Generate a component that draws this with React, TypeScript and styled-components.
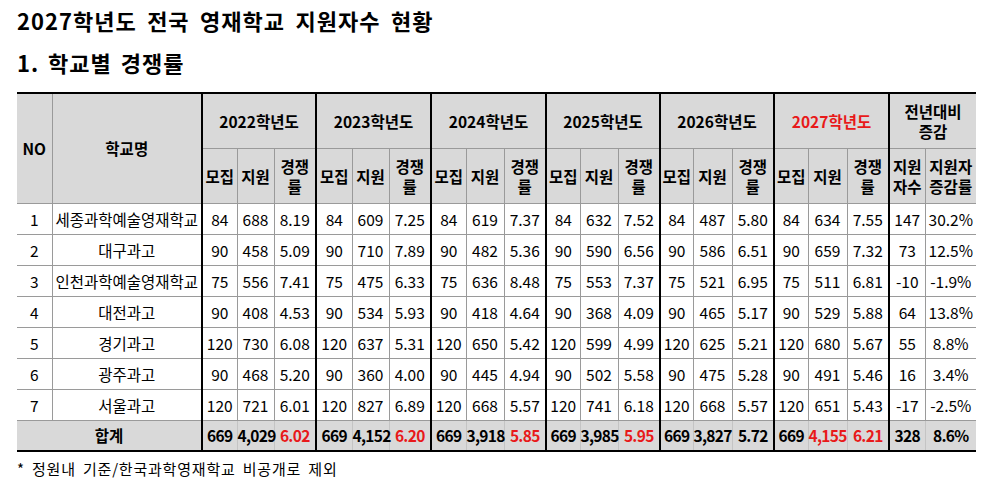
import React from "react";
import styled, { createGlobalStyle } from "styled-components";

const Global = createGlobalStyle`
  html, body { margin: 0; padding: 0; background: #fff; }
  body { font-family: "Noto Sans CJK KR", "Noto Sans", sans-serif; color: #000; }
`;

const Page = styled.div`
  padding: 8px 0 0 17px;
  width: 1000px;
  box-sizing: border-box;
`;

const Title = styled.h1`
  margin: 0;
  font-size: 22px;
  line-height: 24px;
  font-weight: 700;
  letter-spacing: 1px;
  word-spacing: 4.5px;
`;

const SubTitle = styled.h2`
  margin: 18px 0 0 0;
  font-size: 22px;
  line-height: 24px;
  font-weight: 700;
  letter-spacing: 1px;
  word-spacing: 3px;
`;

const Table = styled.table`
  margin-top: 18px;
  border-collapse: collapse;
  table-layout: fixed;
  width: 959px;
  font-size: 15.5px;
`;

const Cell = styled.td<{ $thick?: boolean; $gray?: boolean; $bold?: boolean; $red?: boolean; $first?: boolean; $last?: boolean; $h?: number; $light?: boolean; $tight?: boolean }>`
  border: 1px solid ${(p) => (p.$light ? "#c4c4c4" : "#9a9a9a")};
  ${(p) => (p.$thick ? "border-left: 2px solid #000;" : "")}
  ${(p) => (p.$first ? "border-left: none;" : "")}
  ${(p) => (p.$last ? "border-right: none;" : "")}
  background: ${(p) => (p.$gray ? "#d9d9d9" : "#fff")};
  font-weight: ${(p) => (p.$bold ? 700 : 400)};
  color: ${(p) => (p.$red ? "#e8191a" : "#000")};
  letter-spacing: ${(p) => (p.$tight ? "-0.7px" : "0")};
  text-align: center;
  vertical-align: middle;
  padding: 0;
  height: ${(p) => p.$h ?? 30}px;
  line-height: 20px;
  white-space: nowrap;
  box-sizing: border-box;
`;

const HeadRow = styled.tr`
  & > td { border-top: 2px solid #000; }
`;

const TotalRow = styled.tr`
  & > td { border-bottom: 2px solid #000; }
`;

const Note = styled.p`
  margin: 7px 0 0 0;
  font-size: 15px;
  line-height: 20px;
  letter-spacing: 0.8px;
  word-spacing: 3px;
`;

const widths = [35, 150, 35, 37, 42, 36, 37, 42, 35, 38, 42, 34, 38, 42, 33, 39, 42, 34, 39, 42, 36, 51];

const years = ["2022", "2023", "2024", "2025", "2026", "2027"];

type Row = { no: number; name: string; v: (string | number)[]; diff: string; rate: string };

const rows: Row[] = [
  { no: 1, name: "세종과학예술영재학교", v: [84, 688, "8.19", 84, 609, "7.25", 84, 619, "7.37", 84, 632, "7.52", 84, 487, "5.80", 84, 634, "7.55"], diff: "147", rate: "30.2%" },
  { no: 2, name: "대구과고", v: [90, 458, "5.09", 90, 710, "7.89", 90, 482, "5.36", 90, 590, "6.56", 90, 586, "6.51", 90, 659, "7.32"], diff: "73", rate: "12.5%" },
  { no: 3, name: "인천과학예술영재학교", v: [75, 556, "7.41", 75, 475, "6.33", 75, 636, "8.48", 75, 553, "7.37", 75, 521, "6.95", 75, 511, "6.81"], diff: "-10", rate: "-1.9%" },
  { no: 4, name: "대전과고", v: [90, 408, "4.53", 90, 534, "5.93", 90, 418, "4.64", 90, 368, "4.09", 90, 465, "5.17", 90, 529, "5.88"], diff: "64", rate: "13.8%" },
  { no: 5, name: "경기과고", v: [120, 730, "6.08", 120, 637, "5.31", 120, 650, "5.42", 120, 599, "4.99", 120, 625, "5.21", 120, 680, "5.67"], diff: "55", rate: "8.8%" },
  { no: 6, name: "광주과고", v: [90, 468, "5.20", 90, 360, "4.00", 90, 445, "4.94", 90, 502, "5.58", 90, 475, "5.28", 90, 491, "5.46"], diff: "16", rate: "3.4%" },
  { no: 7, name: "서울과고", v: [120, 721, "6.01", 120, 827, "6.89", 120, 668, "5.57", 120, 741, "6.18", 120, 668, "5.57", 120, 651, "5.43"], diff: "-17", rate: "-2.5%" },
];

const totals: { t: string; red?: boolean }[] = [
  { t: "669" }, { t: "4,029" }, { t: "6.02", red: true },
  { t: "669" }, { t: "4,152" }, { t: "6.20", red: true },
  { t: "669" }, { t: "3,918" }, { t: "5.85", red: true },
  { t: "669" }, { t: "3,985" }, { t: "5.95", red: true },
  { t: "669" }, { t: "3,827" }, { t: "5.72" },
  { t: "669" }, { t: "4,155", red: true }, { t: "6.21", red: true },
];

export default function App() {
  return (
    <>
      <Global />
      <Page>
        <Title>2027학년도 전국 영재학교 지원자수 현황</Title>
        <SubTitle>1. 학교별 경쟁률</SubTitle>
        <Table>
          <colgroup>
            {widths.map((w, i) => (
              <col key={i} style={{ width: w }} />
            ))}
          </colgroup>
          <tbody>
            <HeadRow>
              <Cell $gray $bold $first rowSpan={2} $h={55}>NO</Cell>
              <Cell $gray $bold rowSpan={2}>학교명</Cell>
              {years.map((y) => (
                <Cell key={y} $gray $bold $thick colSpan={3} $h={55} $red={y === "2027"}>
                  {y}학년도
                </Cell>
              ))}
              <Cell $gray $bold $thick $last colSpan={2}>
                전년대비
                <br />
                증감
              </Cell>
            </HeadRow>
            <tr>
              {years.map((y) => (
                <React.Fragment key={y}>
                  <Cell $gray $bold $thick $h={55}>모집</Cell>
                  <Cell $gray $bold>지원</Cell>
                  <Cell $gray $bold>
                    경쟁
                    <br />
                    률
                  </Cell>
                </React.Fragment>
              ))}
              <Cell $gray $bold $thick>
                지원
                <br />
                자수
              </Cell>
              <Cell $gray $bold $last>
                지원자
                <br />
                증감률
              </Cell>
            </tr>
            {rows.map((r) => (
              <tr key={r.no}>
                <Cell $first $h={31}>{r.no}</Cell>
                <Cell>{r.name}</Cell>
                {r.v.map((x, i) => (
                  <Cell key={i} $thick={i % 3 === 0}>
                    {x}
                  </Cell>
                ))}
                <Cell $thick>{r.diff}</Cell>
                <Cell $last>{r.rate}</Cell>
              </tr>
            ))}
            <TotalRow>
              <Cell $gray $bold $first colSpan={2} $h={31}>합계</Cell>
              {totals.map((c, i) => (
                <Cell key={i} $gray $bold $light $tight $thick={i % 3 === 0} $red={c.red}>
                  {c.t}
                </Cell>
              ))}
              <Cell $gray $bold $light $tight $thick>328</Cell>
              <Cell $gray $bold $light $tight $last>8.6%</Cell>
            </TotalRow>
          </tbody>
        </Table>
        <Note>* 정원내 기준/한국과학영재학교 비공개로 제외</Note>
      </Page>
    </>
  );
}
